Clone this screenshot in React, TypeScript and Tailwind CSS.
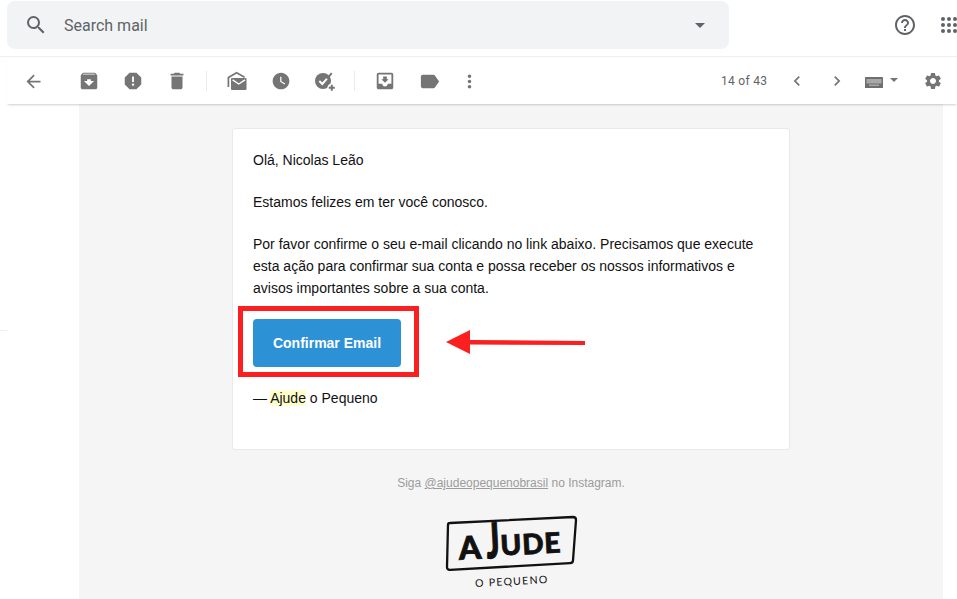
import React from "react";
import {
  MdSearch, MdArrowDropDown, MdHelpOutline, MdArrowBack, MdArchive, MdReport, MdDelete,
  MdWatchLater, MdMoveToInbox, MdLabel, MdMoreVert, MdChevronLeft, MdChevronRight, MdSettings,
} from "react-icons/md";

const Btn = ({ children, w = "w-11" }: { children: React.ReactNode; w?: string }) => (
  <div className={`${w} h-6 flex items-center justify-center text-[#757575] shrink-0`}>{children}</div>
);

const Sep = () => <div className="w-px h-5 bg-[#e8eaed] ml-[7px] mr-2 shrink-0" />;

const MailIcon = () => (
  <svg width="20" height="20" viewBox="0 0 20 20" fill="none">
    <path d="M1.4 16 V6.4 L9.6 1.8 L17.6 6.2" stroke="#757575" strokeWidth="1.7" />
    <rect x="4" y="7" width="15.5" height="12" rx="1" fill="#757575" />
    <path d="M5.6 8.8 L11.8 13 L18 8.8" stroke="#ffffff" strokeWidth="1.4" />
  </svg>
);

const TaskIcon = () => (
  <svg width="24" height="24" viewBox="0 0 24 24" fill="none">
    <circle cx="10" cy="12" r="8" fill="#757575" />
    <path d="M6.3 12 L9.3 15 L14 9.6" stroke="#ffffff" strokeWidth="2" />
    <path d="M14 9.6 L18.8 4.2" stroke="#757575" strokeWidth="1.9" />
    <circle cx="18.8" cy="18.8" r="4.4" fill="#ffffff" />
    <path d="M18.8 15.8 V21.8 M15.8 18.8 H21.8" stroke="#757575" strokeWidth="2" />
  </svg>
);

const AppsIcon = () => (
  <svg width="18" height="18" viewBox="0 0 18 18" fill="#5f6368">
    {[3, 9, 15].flatMap((y) => [3, 9, 15].map((x) => <circle key={`${x}-${y}`} cx={x} cy={y} r="2" />))}
  </svg>
);

const KeyboardIcon = () => (
  <svg width="18" height="11" viewBox="0 0 18 11" className="mt-[3px]">
    <rect width="18" height="11" rx="0.5" fill="#6f6f6f" />
    <rect x="1.5" y="2" width="15" height="4.5" fill="#a8a8a8" />
    <rect x="4" y="7.5" width="10" height="1.5" fill="#a8a8a8" />
  </svg>
);

const Caret = () => (
  <svg width="8" height="4" viewBox="0 0 8 4" className="block">
    <path d="M0 0 H8 L4 4 Z" fill="#757575" />
  </svg>
);

const Logo = () => (
  <svg width="140" height="80" viewBox="0 0 140 80" className="block">
    <g fontFamily="Lato, 'Liberation Sans', sans-serif" fill="#111">
      <path
        d="M9 11 L132 5 Q135 5 135 8 L132 48.5 Q132 51 129 51.2 L9 57.8 Q6 58 6 55 L7 13 Q7 11 9 11 Z"
        fill="none"
        stroke="#111"
        strokeWidth="2.3"
      />
      <g transform="rotate(-3 70 43)" stroke="#111" strokeWidth="0.8">
        <text x="18" y="45" fontSize="32" fontWeight="900">A</text>
        <text fontSize="28" fontWeight="900" transform="translate(46 45) scale(1.08 1.72)">J</text>
        <text x="60" y="43" fontSize="28" fontWeight="900" letterSpacing="0.8">UDE</text>
      </g>
      <text x="34" y="73" fontSize="10.5" letterSpacing="1.3" transform="rotate(-3 70 70)">O PEQUENO</text>
    </g>
  </svg>
);

export default function App() {
  return (
    <div className="relative w-[957px] h-[599px] overflow-hidden bg-white flex flex-col font-['Liberation_Sans',sans-serif]">
      <header className="h-[57px] shrink-0 border-b border-[#eceff1] flex items-start pl-[7px] pt-px">
        <div className="w-[722px] h-12 bg-[#f1f3f4] rounded-lg flex items-center pl-[17px] pr-[17px] text-[#5f6368]">
          <MdSearch size={24} />
          <span className="ml-[16px] pt-[2px] text-base font-['Roboto',sans-serif] text-[#5f6368]">Search mail</span>
          <MdArrowDropDown size={24} className="ml-auto" />
        </div>
        <div className="ml-auto flex items-center h-12 text-[#5f6368]">
          <MdHelpOutline size={24} />
          <div className="ml-[23px] -mr-[1px]"><AppsIcon /></div>
        </div>
      </header>

      <div className="relative z-10 ml-[7px] h-[47px] shrink-0 flex items-center pl-1 pt-px shadow-[0_2px_2px_-1px_rgba(60,64,67,0.25)] bg-white">
        <Btn><MdArrowBack size={21} /></Btn>
        <div className="w-3 shrink-0" />
        <Btn><MdArchive size={22} /></Btn>
        <Btn><MdReport size={22} /></Btn>
        <Btn><MdDelete size={22} /></Btn>
        <Sep />
        <Btn><MailIcon /></Btn>
        <Btn><MdWatchLater size={20} /></Btn>
        <Btn><TaskIcon /></Btn>
        <Sep />
        <Btn><MdMoveToInbox size={22} /></Btn>
        <Btn><MdLabel size={23} /></Btn>
        <Btn w="w-9"><MdMoreVert size={21} /></Btn>
        <span className="ml-[234px] text-xs tracking-[0.3px] font-['Roboto',sans-serif] text-[#5f6368] w-[46px] whitespace-nowrap">14 of 43</span>
        <div className="ml-[18px] flex items-center text-[#757575]">
          <Btn w="w-6"><MdChevronLeft size={20} /></Btn>
          <Btn w="w-6 ml-4"><MdChevronRight size={20} /></Btn>
        </div>
        <div className="ml-4 flex items-start">
          <KeyboardIcon />
          <div className="ml-[7px] mt-1"><Caret /></div>
        </div>
        <div className="ml-[25px] text-[#757575]"><MdSettings size={20} /></div>
      </div>

      <div className="flex-1 ml-[79px] mr-[14px] bg-[#f5f5f5] flex flex-col items-center pt-6">
        <div className="w-[558px] h-[322px] shrink-0 bg-white border border-[#e9e9e9] rounded-[3px] px-5 pt-5 text-sm leading-[22px] text-[#111111]">
          <p>Olá, Nicolas Leão</p>
          <p className="mt-5">Estamos felizes em ter você conosco.</p>
          <p className="mt-5">
            Por favor confirme o seu e-mail clicando no link abaixo. Precisamos que execute esta ação para confirmar sua conta e possa receber os nossos informativos e avisos importantes sobre a sua conta.
          </p>
          <div className="mt-[20px] w-[148px] h-12 rounded-[4px] bg-[#2d91d6] flex items-center justify-center text-white font-bold">
            Confirmar Email
          </div>
          <p className="mt-5">— <span className="bg-[#ffffcc]">Ajude</span> o Pequeno</p>
        </div>
        <p className="mt-[24px] text-xs leading-[18px] text-[#9c9c9c]">
          Siga <span className="underline">@ajudeopequenobrasil</span> no Instagram.
        </p>
        <div className="mt-5"><Logo /></div>
      </div>

      <div className="absolute left-0 top-[330px] w-[7px] h-px bg-[#eeeeee]" />
      <div className="absolute left-[238px] top-[306px] w-[181px] h-[71px] border-[5px] border-[#fb1f1f]" />
      <svg className="absolute left-[444px] top-[326px]" width="144" height="32" viewBox="0 0 144 32">
        <path d="M2 16 L26 4 V14 L141 15 V19 L26 18.5 V28 Z" fill="#fb1f1f" />
      </svg>
    </div>
  );
}
